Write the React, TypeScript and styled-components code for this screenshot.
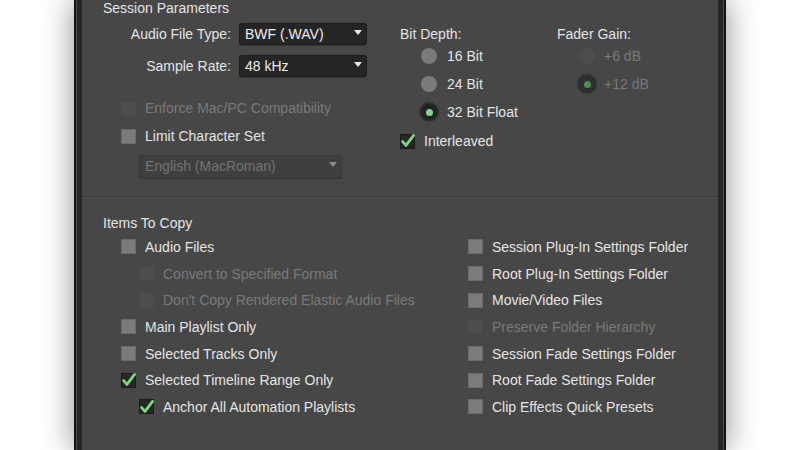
import styled, { createGlobalStyle } from 'styled-components'

const Global = createGlobalStyle`
    html, body {
        margin: 0;
        padding: 0;
        background: #ffffff;
        overflow: hidden;
    }
    body {
        font-family: "Liberation Sans", Arial, sans-serif;
        font-size: 14px;
    }
`

export default function App() {

    const leftItems = [
        { name: "Audio Files", checked: false },
        { name: "Convert to Specified Format", disabled: true, indent: true },
        { name: "Don't Copy Rendered Elastic Audio Files", disabled: true, indent: true },
        { name: "Main Playlist Only" },
        { name: "Selected Tracks Only" },
        { name: "Selected Timeline Range Only", checked: true },
        { name: "Anchor All Automation Playlists", checked: true, indent: true }
    ]

    const rightItems = [
        { name: "Session Plug-In Settings Folder" },
        { name: "Root Plug-In Settings Folder" },
        { name: "Movie/Video Files" },
        { name: "Preserve Folder Hierarchy", disabled: true },
        { name: "Session Fade Settings Folder" },
        { name: "Root Fade Settings Folder" },
        { name: "Clip Effects Quick Presets" }
    ]

    return (
        <Page>
            <Global />
            <Frame>
                <Panel>
                    <TopSection>
                        <Title>Session Parameters</Title>
                        <TopGrid>
                            <Column>
                                <FieldRow>
                                    <FieldLabel>Audio File Type:</FieldLabel>
                                    <Select $width={128}>BWF (.WAV)<Arrow /></Select>
                                </FieldRow>
                                <FieldRow $top={10}>
                                    <FieldLabel>Sample Rate:</FieldLabel>
                                    <Select $width={128}>48 kHz<Arrow /></Select>
                                </FieldRow>
                                <TopChecks>
                                    <Option label="Enforce Mac/PC Compatibility" disabled indent={18} />
                                    <Option label="Limit Character Set" indent={18} />
                                </TopChecks>
                                <Select $width={203} $disabled $indent={36}>English (MacRoman)<Arrow $disabled /></Select>
                            </Column>
                            <Column>
                                <GroupLabel>Bit Depth:</GroupLabel>
                                <RadioOption label="16 Bit" indent={21} gap={10} />
                                <RadioOption label="24 Bit" indent={21} gap={10} />
                                <RadioOption label="32 Bit Float" selected indent={21} gap={10} />
                                <Interleaved>
                                    <Option label="Interleaved" checked indent={0} />
                                </Interleaved>
                            </Column>
                            <Column>
                                <GroupLabel>Fader Gain:</GroupLabel>
                                <RadioOption label="+6 dB" disabled indent={22} gap={9} />
                                <RadioOption label="+12 dB" disabled selected indent={22} gap={9} />
                            </Column>
                        </TopGrid>
                    </TopSection>
                    <Divider />
                    <BottomSection>
                        <SectionTitle>Items To Copy</SectionTitle>
                        <BottomGrid>
                            <Column>
                                {leftItems.map((item) => (
                                    <Option key={item.name} label={item.name} checked={item.checked}
                                        disabled={item.disabled} indent={item.indent ? 18 : 0} />
                                ))}
                            </Column>
                            <Column>
                                {rightItems.map((item) => (
                                    <Option key={item.name} label={item.name} disabled={item.disabled} indent={0} />
                                ))}
                            </Column>
                        </BottomGrid>
                    </BottomSection>
                </Panel>
            </Frame>
        </Page>
    )
}

function Option(props: { label: string, checked?: boolean, disabled?: boolean, indent: number }) {
    return (
        <CheckRow $indent={props.indent}>
            <Box $checked={props.checked} $disabled={props.disabled}>
                {props.checked && (
                    <svg width="16" height="16" viewBox="0 0 16 16">
                        <polyline points="2.6,8.6 6,12.4 13.6,2.4" fill="none" stroke="#7bd97b"
                            strokeWidth="2.8" strokeLinecap="round" strokeLinejoin="round" />
                    </svg>
                )}
            </Box>
            <Label $disabled={props.disabled}>{props.label}</Label>
        </CheckRow>
    )
}

function RadioOption(props: { label: string, selected?: boolean, disabled?: boolean, indent: number, gap: number }) {
    return (
        <RadioRow $indent={props.indent} $gap={props.gap}>
            <Radio $selected={props.selected} $disabled={props.disabled} />
            <Label $disabled={props.disabled}>{props.label}</Label>
        </RadioRow>
    )
}

const Page = styled.div`
    width: 800px;
    height: 450px;
    display: flex;
    justify-content: center;
`

const Frame = styled.div`
    width: 652px;
    height: 450px;
    box-sizing: border-box;
    background: #262626;
    border: solid #141414;
    border-width: 0 2px;
    padding: 0 6px;
    box-shadow: 0 0 30px rgba(0, 0, 0, 0.45), inset 1px 0 0 #4c4c4c, inset -1px 0 0 #4c4c4c;
`

const Panel = styled.div`
    height: 100%;
    background: #474747;
    color: #e4e4e4;
    display: flex;
    flex-direction: column;
`

const TopSection = styled.div`
    height: 196px;
    padding-left: 21px;
`

const Title = styled.div`
    height: 16px;
    line-height: 16px;
`

const TopGrid = styled.div`
    display: grid;
    grid-template-columns: 297px 157px 1fr;
`

const Column = styled.div`
    display: flex;
    flex-direction: column;
`

const FieldRow = styled.div<{ $top?: number }>`
    display: flex;
    align-items: center;
    margin-top: ${(p) => p.$top ?? 7}px;
`

const FieldLabel = styled.div`
    width: 128px;
    margin-right: 8px;
    text-align: right;
`

const Select = styled.div<{ $width: number, $disabled?: boolean, $indent?: number }>`
    position: relative;
    width: ${(p) => p.$width}px;
    height: ${(p) => (p.$disabled ? 23 : 22)}px;
    margin-left: ${(p) => p.$indent ?? 0}px;
    margin-top: ${(p) => (p.$disabled ? 5 : 0)}px;
    box-sizing: border-box;
    padding-left: 5px;
    line-height: 21px;
    border-radius: 3px;
    background: ${(p) => (p.$disabled ? '#3f3f3f' : '#252525')};
    border: 1px solid ${(p) => (p.$disabled ? '#3a3a3a' : '#1c1c1c')};
    color: ${(p) => (p.$disabled ? '#747474' : '#ececec')};
    box-shadow: 0 1px 1px rgba(0, 0, 0, 0.25);
`

const Arrow = styled.span<{ $disabled?: boolean }>`
    position: absolute;
    right: 4px;
    top: 6px;
    width: 0;
    height: 0;
    border-left: 4px solid transparent;
    border-right: 4px solid transparent;
    border-top: 5px solid ${(p) => (p.$disabled ? '#8a8a8a' : '#e8e8e8')};
`

const TopChecks = styled.div`
    margin-top: 17px;
    display: flex;
    flex-direction: column;
`

const CheckRow = styled.div<{ $indent: number }>`
    height: 26.67px;
    display: flex;
    align-items: center;
    gap: 9px;
    padding-left: ${(p) => p.$indent}px;
    ${TopChecks} & {
        height: 28px;
    }
`

const Box = styled.div<{ $checked?: boolean, $disabled?: boolean }>`
    width: 15px;
    height: 15px;
    flex: none;
    box-sizing: border-box;
    display: flex;
    align-items: center;
    justify-content: center;
    border: 1px solid ${(p) => (p.$checked ? '#1b1b1b' : p.$disabled ? '#4a4a4a' : '#6c6c6c')};
    background: ${(p) => (p.$checked ? '#262626' : p.$disabled ? '#4e4e4e' : '#7b7b7b')};
    svg {
        flex: none;
    }
`

const Label = styled.span<{ $disabled?: boolean }>`
    color: ${(p) => (p.$disabled ? '#7a7a7a' : '#e4e4e4')};
    white-space: nowrap;
`

const GroupLabel = styled.div`
    height: 16px;
    line-height: 16px;
    margin-top: 10px;
`

const RadioRow = styled.div<{ $indent: number, $gap: number }>`
    height: 28px;
    display: flex;
    align-items: center;
    gap: ${(p) => p.$gap}px;
    padding-left: ${(p) => p.$indent}px;
`

const Radio = styled.div<{ $selected?: boolean, $disabled?: boolean }>`
    width: 16px;
    height: 16px;
    flex: none;
    border-radius: 50%;
    display: flex;
    align-items: center;
    justify-content: center;
    background: ${(p) => (p.$selected ? (p.$disabled ? '#2f2f2f' : '#232323') : p.$disabled ? '#4d4d4d' : '#7a7a7a')};
    box-shadow: ${(p) => (p.$selected ? '0 0 0 2px rgba(30, 30, 30, 0.55)' : 'none')};
    &::after {
        content: '';
        display: ${(p) => (p.$selected ? 'block' : 'none')};
        width: 7px;
        height: 7px;
        border-radius: 50%;
        background: ${(p) => (p.$disabled ? '#4f8c4f' : '#84d684')};
    }
`

const Interleaved = styled.div`
    margin-top: 2px;
`

const Divider = styled.div`
    height: 1px;
    background: #343434;
    border-bottom: 1px solid #4f4f4f;
`

const BottomSection = styled.div`
    padding-left: 21px;
`

const SectionTitle = styled.div`
    height: 16px;
    line-height: 16px;
    margin-top: 17px;
`

const BottomGrid = styled.div`
    display: grid;
    grid-template-columns: 347px 1fr;
    padding-left: 18px;
    margin-top: 2.67px;
`
